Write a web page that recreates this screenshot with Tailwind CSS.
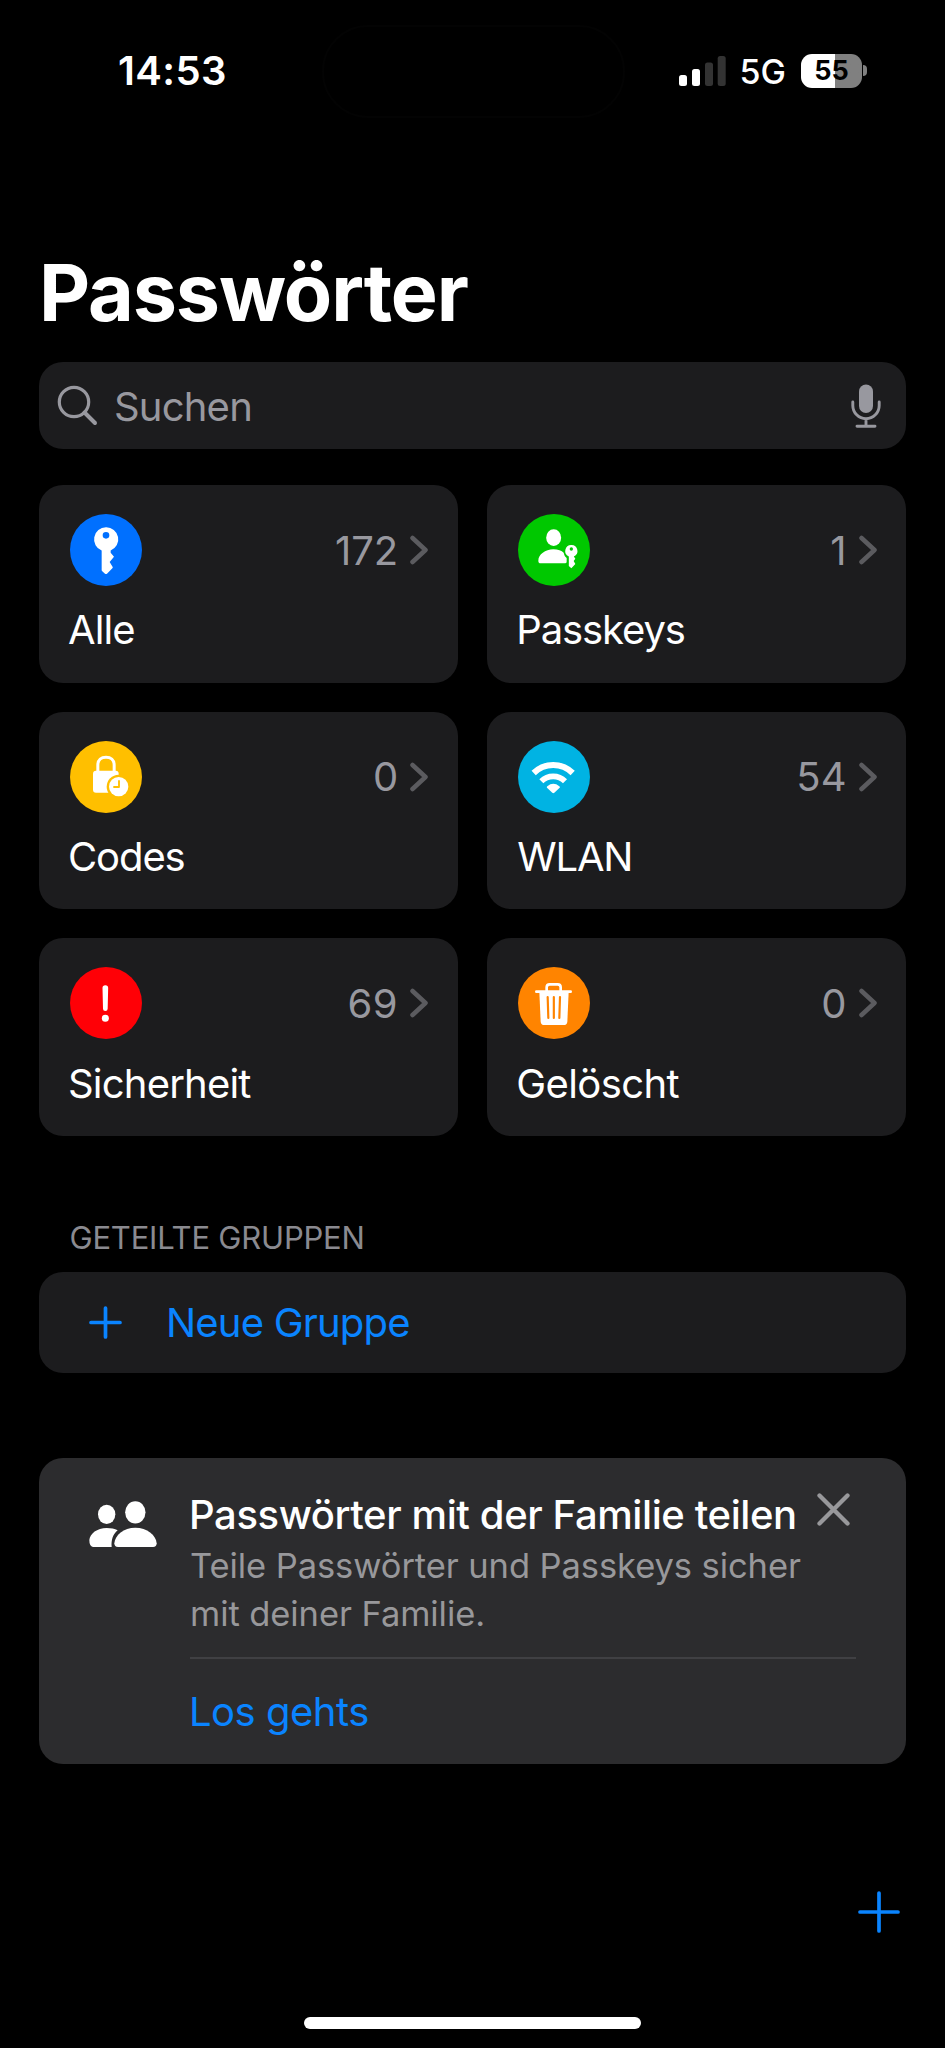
<!DOCTYPE html>
<html lang="de">
<head>
<meta charset="utf-8">
<title>Passwörter</title>
<script src="https://cdn.jsdelivr.net/npm/@tailwindcss/browser@4"></script>
</head>
<body class="bg-black">
<div class="flex h-[2048px] w-[945px] flex-col overflow-hidden bg-black font-['Inter','Liberation_Sans',sans-serif] text-[40px] leading-[48px] text-white">

  <!-- Status bar -->
  <header class="flex h-[141px] items-center pr-[78px] pl-[118px]">
    <span class="w-[204px] font-semibold tracking-[0.4px]">14:53</span>
    <div class="mt-[2px] h-[93px] w-[303px] rounded-[46px] border-2 border-[#030303]"></div>
    <svg class="ml-auto h-[30px] w-[47px]" viewBox="0 0 47 30">
      <rect x="0" y="19" width="8" height="11" rx="2.5" fill="#fff"/>
      <rect x="13" y="13" width="8" height="17" rx="2.5" fill="#fff"/>
      <rect x="26" y="6.500" width="8" height="23.500" rx="2.500" fill="#333"/>
      <rect x="38.700" y="0" width="8" height="30" rx="2.500" fill="#333"/>
    </svg>
    <span class="ml-[14px] pt-[2px] text-[34px] font-medium">5G</span>
    <div class="ml-[15px] flex h-[34px] w-[61px] items-center justify-center rounded-[11px] bg-linear-to-r from-white from-55% to-[#808080] to-55% pt-px text-[27px] leading-[34px] font-bold text-black">55</div>
    <div class="ml-px h-[11px] w-[4px] rounded-r-full bg-[#808080]"></div>
  </header>

  <main class="flex flex-col px-[39px]">
    <h1 class="mt-[103px] text-[79px] leading-[96px] font-bold tracking-[-1.150px]">Passwörter</h1>

    <!-- Search -->
    <div class="mt-[22px] flex h-[87px] items-center rounded-[24px] bg-[#1c1c1e] pr-[25px] pl-[18px] text-[#98989f]">
      <svg class="h-[41px] w-[41px]" viewBox="0 0 41 41" fill="none" stroke="currentColor">
        <circle cx="17" cy="17" r="14.700" stroke-width="3.200"/>
        <path d="M27.500 27.500L38 38" stroke-width="4" stroke-linecap="round"/>
      </svg>
      <span class="ml-[16px] pt-[2px] tracking-[-0.8px]">Suchen</span>
      <svg class="ml-auto h-[44px] w-[30px]" viewBox="0 0 30 44" fill="none" stroke="currentColor" stroke-width="2.900" stroke-linecap="round">
        <rect x="8" y="0.500" width="14" height="28.500" rx="7" fill="currentColor" stroke="none"/>
        <path d="M1.800 18V21.500A13.200 13.200 0 0 0 28.200 21.500V18M15 34.700V42M6 42.300H24"/>
      </svg>
    </div>

    <!-- Categories -->
    <div class="mt-[36px] grid grid-cols-2 gap-x-[29.500px] gap-y-[29px]">
      <section class="h-[197.600px] rounded-[24px] bg-[#1c1c1e] pt-[29px] pr-[29.500px] pl-[31px]">
        <div class="flex items-center">
          <svg class="h-[72px] w-[72px]" viewBox="0 0 216 216">
            <circle cx="108" cy="108" r="108" fill="#0070ff"/>
            <path fill="#fff" fill-rule="evenodd" d="M108 40a36 36 0 0 1 14 69.500V116L132 128L119 144L128 159Q129 161 127 163L111 179Q108 181.500 105 179L96 171Q95 170 95 168V109.500A36 36 0 0 1 108 40ZM108 54a10 10 0 1 0 0 20a10 10 0 0 0 0-20Z"/>
          </svg>
          <span class="ml-auto pt-px text-[#98989f]">172</span>
          <svg class="ml-[12px] h-[30px] w-[18px]" viewBox="0 0 18 30" fill="none" stroke="#5b5b5f" stroke-width="4.500" stroke-linecap="round" stroke-linejoin="round"><path d="M2.500 3L15.500 15L2.500 27"/></svg>
        </div>
        <p class="mt-[20px] -ml-[2px] tracking-[-0.900px]">Alle</p>
      </section>

      <section class="h-[197.600px] rounded-[24px] bg-[#1c1c1e] pt-[29px] pr-[29.500px] pl-[31px]">
        <div class="flex items-center">
          <svg class="h-[72px] w-[72px]" viewBox="0 0 216 216">
            <circle cx="108" cy="108" r="108" fill="#00c800"/>
            <ellipse cx="107" cy="71" rx="22.500" ry="25" fill="#fff"/>
            <path d="M61 140C61 122 82 106 106 106C120 106 131 110 137 116C139 124 141 128 146 132V143Q146 148 141 148H68Q61 148 61 140Z" fill="#fff"/>
            <path fill="#fff" fill-rule="evenodd" d="M160 93a18 18 0 0 1 7.500 34.500L172 134L167 141L172 150L160 163L152.500 156V127.500A18 18 0 0 1 160 93ZM160 100a5 5 0 1 0 0 10a5 5 0 0 0 0-10Z"/>
          </svg>
          <span class="ml-auto pt-px text-[#98989f]">1</span>
          <svg class="ml-[12px] h-[30px] w-[18px]" viewBox="0 0 18 30" fill="none" stroke="#5b5b5f" stroke-width="4.500" stroke-linecap="round" stroke-linejoin="round"><path d="M2.500 3L15.500 15L2.500 27"/></svg>
        </div>
        <p class="mt-[20px] -ml-[2px] tracking-[-1.100px]">Passkeys</p>
      </section>

      <section class="h-[197.600px] rounded-[24px] bg-[#1c1c1e] pt-[29px] pr-[29.500px] pl-[31px]">
        <div class="flex items-center">
          <svg class="h-[72px] w-[72px]" viewBox="0 0 216 216">
            <circle cx="108" cy="108" r="108" fill="#ffbf00"/>
            <path d="M83.500 93V72C83.500 56 94 48.500 108 48.500S132.500 56 132.500 72V93" fill="none" stroke="#fff" stroke-width="9"/>
            <rect x="69" y="89" width="77" height="66" rx="9" fill="#fff"/>
            <circle cx="146" cy="137" r="36" fill="#ffbf00"/>
            <circle cx="146" cy="137" r="29" fill="#fff"/>
            <path d="M147 120V138H132" fill="none" stroke="#ffbf00" stroke-width="5.500" stroke-linecap="round" stroke-linejoin="round"/>
          </svg>
          <span class="ml-auto pt-px text-[#98989f]">0</span>
          <svg class="ml-[12px] h-[30px] w-[18px]" viewBox="0 0 18 30" fill="none" stroke="#5b5b5f" stroke-width="4.500" stroke-linecap="round" stroke-linejoin="round"><path d="M2.500 3L15.500 15L2.500 27"/></svg>
        </div>
        <p class="mt-[20.500px] -ml-[2px] tracking-[-1.100px]">Codes</p>
      </section>

      <section class="h-[197.600px] rounded-[24px] bg-[#1c1c1e] pt-[29px] pr-[29.500px] pl-[31px]">
        <div class="flex items-center">
          <svg class="h-[72px] w-[72px]" viewBox="0 0 216 216">
            <circle cx="108" cy="108" r="108" fill="#00b3e3"/>
            <path d="M47 96A83 83 0 0 1 164 96" fill="none" stroke="#fff" stroke-width="18"/>
            <path d="M70 121A50 50 0 0 1 141 121" fill="none" stroke="#fff" stroke-width="17"/>
            <path d="M87 140Q85 138 88 135.500Q106 121 124 135.500Q127 138 125 140L109 155.500Q106 158 103 155.500Z" fill="#fff"/>
          </svg>
          <span class="ml-auto pt-px text-[#98989f]">54</span>
          <svg class="ml-[12px] h-[30px] w-[18px]" viewBox="0 0 18 30" fill="none" stroke="#5b5b5f" stroke-width="4.500" stroke-linecap="round" stroke-linejoin="round"><path d="M2.500 3L15.500 15L2.500 27"/></svg>
        </div>
        <p class="mt-[20.500px] -ml-px tracking-[-1.200px]">WLAN</p>
      </section>

      <section class="h-[197.600px] rounded-[24px] bg-[#1c1c1e] pt-[29px] pr-[29.500px] pl-[31px]">
        <div class="flex items-center">
          <svg class="h-[72px] w-[72px]" viewBox="0 0 216 216">
            <circle cx="108" cy="108" r="108" fill="#ff0006"/>
            <path d="M97.500 63A8.500 8.500 0 0 1 114.500 63L113 125A7 7 0 0 1 99 125Z" fill="#fff"/>
            <circle cx="106" cy="154" r="10.500" fill="#fff"/>
          </svg>
          <span class="ml-auto pt-px tracking-[0.600px] text-[#98989f]">69</span>
          <svg class="ml-[12px] h-[30px] w-[18px]" viewBox="0 0 18 30" fill="none" stroke="#5b5b5f" stroke-width="4.500" stroke-linecap="round" stroke-linejoin="round"><path d="M2.500 3L15.500 15L2.500 27"/></svg>
        </div>
        <p class="mt-[20.500px] -ml-[2px] tracking-[-0.800px]">Sicherheit</p>
      </section>

      <section class="h-[197.600px] rounded-[24px] bg-[#1c1c1e] pt-[29px] pr-[29.500px] pl-[31px]">
        <div class="flex items-center">
          <svg class="h-[72px] w-[72px]" viewBox="0 0 216 216">
            <circle cx="108" cy="108" r="108" fill="#ff8400"/>
            <path d="M55 74H158M86 74V61Q86 52 95 52H119Q128 52 128 61V74" fill="none" stroke="#fff" stroke-width="8" stroke-linecap="round"/>
            <path d="M64 74H152L148 164Q147 174 137 174H79Q69 174 68 164Z" fill="#fff"/>
            <path d="M89 90L91 153M107.500 90V153M126 90L124 153" fill="none" stroke="#ff8400" stroke-width="6.500" stroke-linecap="round"/>
          </svg>
          <span class="ml-auto pt-px text-[#98989f]">0</span>
          <svg class="ml-[12px] h-[30px] w-[18px]" viewBox="0 0 18 30" fill="none" stroke="#5b5b5f" stroke-width="4.500" stroke-linecap="round" stroke-linejoin="round"><path d="M2.500 3L15.500 15L2.500 27"/></svg>
        </div>
        <p class="mt-[20.500px] -ml-[2px] tracking-[-0.600px]">Gelöscht</p>
      </section>
    </div>

    <!-- Shared groups -->
    <h2 class="mt-[82px] pl-[30.500px] text-[31px] leading-[40px] tracking-[-0.200px] text-[#8a8a90]">GETEILTE GRUPPEN</h2>
    <div class="mt-[14px] flex h-[101px] items-center rounded-[24px] bg-[#1c1c1e] pl-[50px] text-[#0a84ff]">
      <svg class="h-[33px] w-[33px]" viewBox="0 0 33 33" fill="none" stroke="currentColor" stroke-width="3.700" stroke-linecap="round"><path d="M16.500 2V31M2 16.500H31"/></svg>
      <span class="ml-[44px] pt-px tracking-[-0.800px]">Neue Gruppe</span>
    </div>

    <!-- Family sharing tip -->
    <div class="mt-[85px] flex h-[306.500px] rounded-[24px] bg-[#2c2c2e] pt-[33px] pr-[50px] pl-[50px]">
      <svg class="mt-[9px] h-[48px] w-[69px] shrink-0" viewBox="0 0 207 144" fill="#fff">
        <ellipse cx="53" cy="43" rx="26" ry="29"/>
        <path d="M12 141Q1 139 1 120C3 101 24 84 53 84C66 84 77 86 86 91C72 102 66 120 68 141Z"/>
        <ellipse cx="139" cy="37" rx="30.500" ry="33.500"/>
        <path d="M87 141Q76 141 76 130C78 105 104 83 139 83S201 105 203 130Q203 141 192 141Z"/>
      </svg>
      <div class="ml-[32px] flex flex-1 flex-col">
        <div class="flex justify-between pr-[6px]">
          <h3 class="-ml-px font-medium tracking-[-0.400px] whitespace-nowrap">Passwörter mit der Familie teilen</h3>
          <svg class="mt-[2px] h-[33px] w-[33px] shrink-0" viewBox="0 0 33 33" fill="none" stroke="#98989b" stroke-width="4.300" stroke-linecap="round"><path d="M2.500 2.500L30.500 30.500M30.500 2.500L2.500 30.500"/></svg>
        </div>
        <p class="mt-[3px] text-[34.500px] leading-[48.500px] tracking-[-0.080px] whitespace-nowrap text-[#98989b]">Teile Passwörter und Passkeys sicher<br>mit deiner Familie.</p>
        <div class="mt-[18.500px] h-[1.500px] bg-[#404043]"></div>
        <span class="mt-[29.500px] -ml-px tracking-[-0.500px] text-[#0a84ff]">Los gehts</span>
      </div>
    </div>
  </main>

  <!-- Toolbar -->
  <footer class="flex flex-1 flex-col">
    <svg class="mt-[127px] mr-[45.500px] h-[42px] w-[42px] self-end" viewBox="0 0 42 42" fill="none" stroke="#0a84ff" stroke-width="3.700" stroke-linecap="round"><path d="M21 2V40M2 21H40"/></svg>
    <div class="mt-auto mb-[19px] h-[12px] w-[337px] self-center rounded-full bg-white"></div>
  </footer>
</div>
</body>
</html>
